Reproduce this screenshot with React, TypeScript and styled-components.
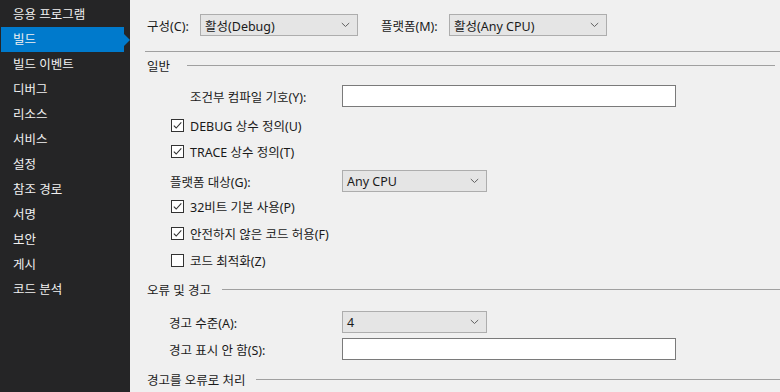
import React, {FC} from 'react';
import styled, {createGlobalStyle} from "styled-components";

const GlobalStyle = createGlobalStyle`
  html, body {
    margin: 0;
    padding: 0;
    background: #f0f0f0;
  }
  body {
    font-family: "Noto Sans", "Noto Sans CJK KR", sans-serif;
    font-size: 12.5px;
    color: #1a1a1a;
  }
`

const navItems = ['응용 프로그램', '빌드', '빌드 이벤트', '디버그', '리소스', '서비스', '설정', '참조 경로', '서명', '보안', '게시', '코드 분석']

const Chevron: FC = () => (
    <svg width="9" height="6" viewBox="0 0 9 6">
        <path d="M0.8 1 L4.5 4.5 L8.2 1" fill="none" stroke="#606060" strokeWidth="1"/>
    </svg>
)

const Check: FC<{checked?: boolean}> = ({checked}) => (
    <Box>
        {checked && (
            <svg width="11" height="11" viewBox="0 0 11 11">
                <path d="M1.8 5.6 L4.2 8 L9.3 2.4" fill="none" stroke="#333" strokeWidth="1.1"/>
            </svg>
        )}
    </Box>
)

const App: FC = () => {
    return (
        <>
            <GlobalStyle/>
            <Page>
                <SideBar>
                    {navItems.map((item, i) => (
                        <NavItem key={item} $active={i === 1}>{item}</NavItem>
                    ))}
                </SideBar>
                <Main>
                    <TopBar>
                        <TopLabel>구성(C):</TopLabel>
                        <Select $width={158}>
                            <span>활성(Debug)</span>
                            <Chevron/>
                        </Select>
                        <TopLabel $left={23}>플랫폼(M):</TopLabel>
                        <Select $width={158}>
                            <span>활성(Any CPU)</span>
                            <Chevron/>
                        </Select>
                    </TopBar>
                    <Divider/>

                    <SectionHeader $top={6} $lineEnd={5} $gap={17}>일반</SectionHeader>
                    <Row $top={13}>
                        <Label $indent={45}>조건부 컴파일 기호(Y):</Label>
                        <TextInput/>
                    </Row>
                    <Row $top={7}>
                        <CheckLabel><Check checked/>DEBUG 상수 정의(U)</CheckLabel>
                    </Row>
                    <Row $top={4}>
                        <CheckLabel><Check checked/>TRACE 상수 정의(T)</CheckLabel>
                    </Row>
                    <Row $top={8}>
                        <Label $indent={25}>플랫폼 대상(G):</Label>
                        <Select $width={145}>
                            <span>Any CPU</span>
                            <Chevron/>
                        </Select>
                    </Row>
                    <Row $top={3}>
                        <CheckLabel><Check checked/>32비트 기본 사용(P)</CheckLabel>
                    </Row>
                    <Row $top={5}>
                        <CheckLabel><Check checked/>안전하지 않은 코드 허용(F)</CheckLabel>
                    </Row>
                    <Row $top={5}>
                        <CheckLabel><Check/>코드 최적화(Z)</CheckLabel>
                    </Row>

                    <SectionHeader $top={11} $gap={11}>오류 및 경고</SectionHeader>
                    <Row $top={15}>
                        <Label $indent={24}>경고 수준(A):</Label>
                        <Select $width={145}>
                            <span>4</span>
                            <Chevron/>
                        </Select>
                    </Row>
                    <Row $top={5}>
                        <Label $indent={24}>경고 표시 안 함(S):</Label>
                        <TextInput/>
                    </Row>

                    <SectionHeader $top={12} $gap={10}>경고를 오류로 처리</SectionHeader>
                </Main>
            </Page>
        </>
    );
};

export default App;


const Page = styled.div`
  display: flex;
  width: 780px;
  height: 392px;
  overflow: hidden;
  background: #f0f0f0;
`
const SideBar = styled.div`
  width: 130px;
  flex-shrink: 0;
  background: #252526;
  padding-top: 2px;
  box-sizing: border-box;
`
const NavItem = styled.div<{$active?: boolean}>`
  position: relative;
  height: 25px;
  line-height: 25px;
  margin-left: 1px;
  width: 123px;
  padding-left: 12px;
  box-sizing: border-box;
  color: #f1f1f1;
  white-space: nowrap;
  background: ${p => p.$active ? '#007acc' : 'transparent'};
  &::after{
    content: '';
    display: ${p => p.$active ? 'block' : 'none'};
    position: absolute;
    right: -6px;
    top: 7px;
    border-top: 6px solid transparent;
    border-bottom: 6px solid transparent;
    border-left: 6px solid #007acc;
  }
`
const Main = styled.div`
  flex: 1;
  padding: 14px 0 0 15px;
  display: flex;
  flex-direction: column;
`
const TopBar = styled.div`
  display: flex;
  align-items: center;
  height: 22px;
  padding-left: 2px;
`
const TopLabel = styled.span<{$left?: number}>`
  margin-left: ${p => p.$left || 0}px;
  width: ${p => p.$left ? 68 : 53}px;
  white-space: nowrap;
`
const Select = styled.div<{$width: number}>`
  width: ${p => p.$width}px;
  height: 22px;
  box-sizing: border-box;
  border: 1px solid #adadad;
  background: #e5e5e5;
  display: flex;
  align-items: center;
  justify-content: space-between;
  padding: 0 7px 0 4px;
  white-space: nowrap;
`
const Divider = styled.div`
  margin-top: 15px;
  height: 1px;
  background: #a0a0a0;
`
const SectionHeader = styled.div<{$top: number, $lineEnd?: number, $gap: number}>`
  margin-top: ${p => p.$top}px;
  height: 14px;
  display: flex;
  align-items: center;
  padding-left: 2px;
  padding-right: ${p => p.$lineEnd || 0}px;
  white-space: nowrap;
  &::after{
    content: '';
    flex: 1;
    height: 1px;
    background: #a0a0a0;
    margin-left: ${p => p.$gap}px;
  }
`
const Row = styled.div<{$top: number}>`
  margin-top: ${p => p.$top}px;
  height: 22px;
  display: flex;
  align-items: center;
`
const Label = styled.div<{$indent: number}>`
  width: 197px;
  padding-left: ${p => p.$indent}px;
  box-sizing: border-box;
  white-space: nowrap;
`
const TextInput = styled.div`
  width: 334px;
  height: 22px;
  box-sizing: border-box;
  border: 1px solid #7a7a7a;
  background: #fff;
`
const CheckLabel = styled.label`
  display: flex;
  align-items: center;
  gap: 6px;
  padding-left: 26px;
  white-space: nowrap;
`
const Box = styled.span`
  width: 13px;
  height: 13px;
  box-sizing: border-box;
  border: 1px solid #333;
  background: #fff;
  display: flex;
  align-items: center;
  justify-content: center;
`
